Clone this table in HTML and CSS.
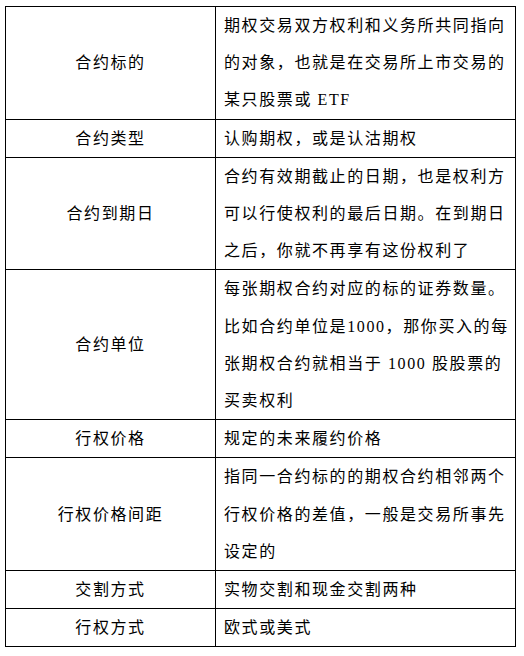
FILE: index.html
```html
<!DOCTYPE html>
<html lang="zh-CN">
<head>
<meta charset="utf-8">
<title>期权合约要素</title>
<link rel="stylesheet" href="styles.css">
</head>
<body>
<div class="page">
  <table class="terms">
    <tbody>
      <tr>
        <td class="term">合约标的</td>
        <td class="desc">期权交易双方权利和义务所共同指向的对象，也就是在交易所上市交易的某只股票或 ETF</td>
      </tr>
      <tr>
        <td class="term">合约类型</td>
        <td class="desc">认购期权，或是认沽期权</td>
      </tr>
      <tr>
        <td class="term">合约到期日</td>
        <td class="desc">合约有效期截止的日期，也是权利方可以行使权利的最后日期。在到期日之后，你就不再享有这份权利了</td>
      </tr>
      <tr>
        <td class="term">合约单位</td>
        <td class="desc">每张期权合约对应的标的证券数量。比如合约单位是1000，那你买入的每张期权合约就相当于 1000 股股票的买卖权利</td>
      </tr>
      <tr>
        <td class="term">行权价格</td>
        <td class="desc">规定的未来履约价格</td>
      </tr>
      <tr>
        <td class="term">行权价格间距</td>
        <td class="desc">指同一合约标的的期权合约相邻两个行权价格的差值，一般是交易所事先设定的</td>
      </tr>
      <tr>
        <td class="term">交割方式</td>
        <td class="desc">实物交割和现金交割两种</td>
      </tr>
      <tr>
        <td class="term">行权方式</td>
        <td class="desc">欧式或美式</td>
      </tr>
    </tbody>
  </table>
</div>
</body>
</html>
```

FILE: styles.css
```css
html, body {
  margin: 0;
  padding: 0;
  background: #ffffff;
}

.page {
  padding: 6px 8px 0 5px;
}

.terms {
  border-collapse: collapse;
  width: 511px;
  table-layout: fixed;
  font-family: "Liberation Serif", "Noto Sans CJK SC", sans-serif;
  font-size: 16px;
  letter-spacing: 1.6px;
  line-height: 37.2px;
  color: #000000;
}

.terms td {
  border: 1px solid #000000;
  padding: 0;
}

.term {
  width: 209px;
  text-align: center;
  vertical-align: middle;
}

.desc {
  text-align: left;
  vertical-align: top;
  padding: 0 5px 0 8px !important;
  word-break: break-all;
}
```
